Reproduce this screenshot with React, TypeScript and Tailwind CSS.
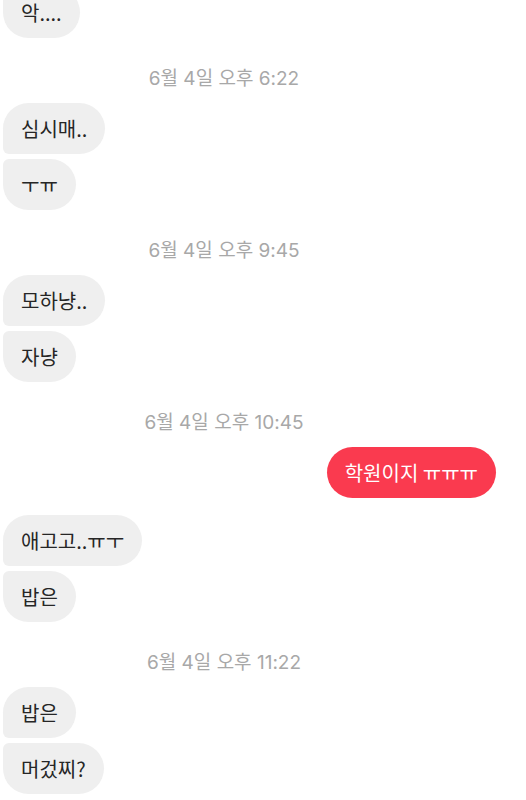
type Msg = { text: string; pos: "first" | "last" | "single" };

type Block =
  | { kind: "time"; label: string }
  | { kind: "in"; msgs: Msg[] }
  | { kind: "out"; text: string };

const blocks: Block[] = [
  { kind: "in", msgs: [{ text: "악....", pos: "last" }] },
  { kind: "time", label: "6월 4일 오후 6:22" },
  {
    kind: "in",
    msgs: [
      { text: "심시매..", pos: "first" },
      { text: "ㅜㅠ", pos: "last" },
    ],
  },
  { kind: "time", label: "6월 4일 오후 9:45" },
  {
    kind: "in",
    msgs: [
      { text: "모하냥..", pos: "first" },
      { text: "자냥", pos: "last" },
    ],
  },
  { kind: "time", label: "6월 4일 오후 10:45" },
  { kind: "out", text: "학원이지 ㅠㅠㅠ" },
  {
    kind: "in",
    msgs: [
      { text: "애고고..ㅠㅜ", pos: "first" },
      { text: "밥은", pos: "last" },
    ],
  },
  { kind: "time", label: "6월 4일 오후 11:22" },
  {
    kind: "in",
    msgs: [
      { text: "밥은", pos: "first" },
      { text: "머겄찌?", pos: "last" },
    ],
  },
];

const corner = {
  first: "rounded-[26px] rounded-bl-[6px]",
  last: "rounded-[26px] rounded-tl-[6px]",
  single: "rounded-[26px]",
};

function Timestamp({ label }: { label: string }) {
  return (
    <div
      className="mt-[28px] mb-[11px] h-[26px] pr-[78px] text-center text-[19px] leading-[26px] text-[#a8a8a8]"
      style={{ fontFamily: 'Inter, "Noto Sans CJK KR", sans-serif' }}
    >
      {label}
    </div>
  );
}

function Incoming({ msgs }: { msgs: Msg[] }) {
  return (
    <div className="flex flex-col items-start gap-[5px] pl-[3px]">
      {msgs.map((m, i) => (
        <div
          key={i}
          className={`h-[51px] bg-[#efefef] px-[18px] text-[20px] leading-[51px] text-[#262626] ${corner[m.pos]}`}
        >
          {m.text}
        </div>
      ))}
    </div>
  );
}

function Outgoing({ text }: { text: string }) {
  return (
    <div className="mb-[17px] flex justify-end pr-[30px]">
      <div className="h-[51px] rounded-[26px] bg-[#fa3a4f] px-[18px] text-[20px] leading-[51px] text-white">
        {text}
      </div>
    </div>
  );
}

export default function App() {
  return (
    <div
      className="h-[800px] w-[526px] overflow-hidden bg-white"
      style={{ fontFamily: '"Noto Sans CJK KR", "Noto Sans", sans-serif' }}
    >
      <div className="-mt-[13px]">
        {blocks.map((b, i) => {
          if (b.kind === "time") return <Timestamp key={i} label={b.label} />;
          if (b.kind === "out") return <Outgoing key={i} text={b.text} />;
          return <Incoming key={i} msgs={b.msgs} />;
        })}
      </div>
    </div>
  );
}
